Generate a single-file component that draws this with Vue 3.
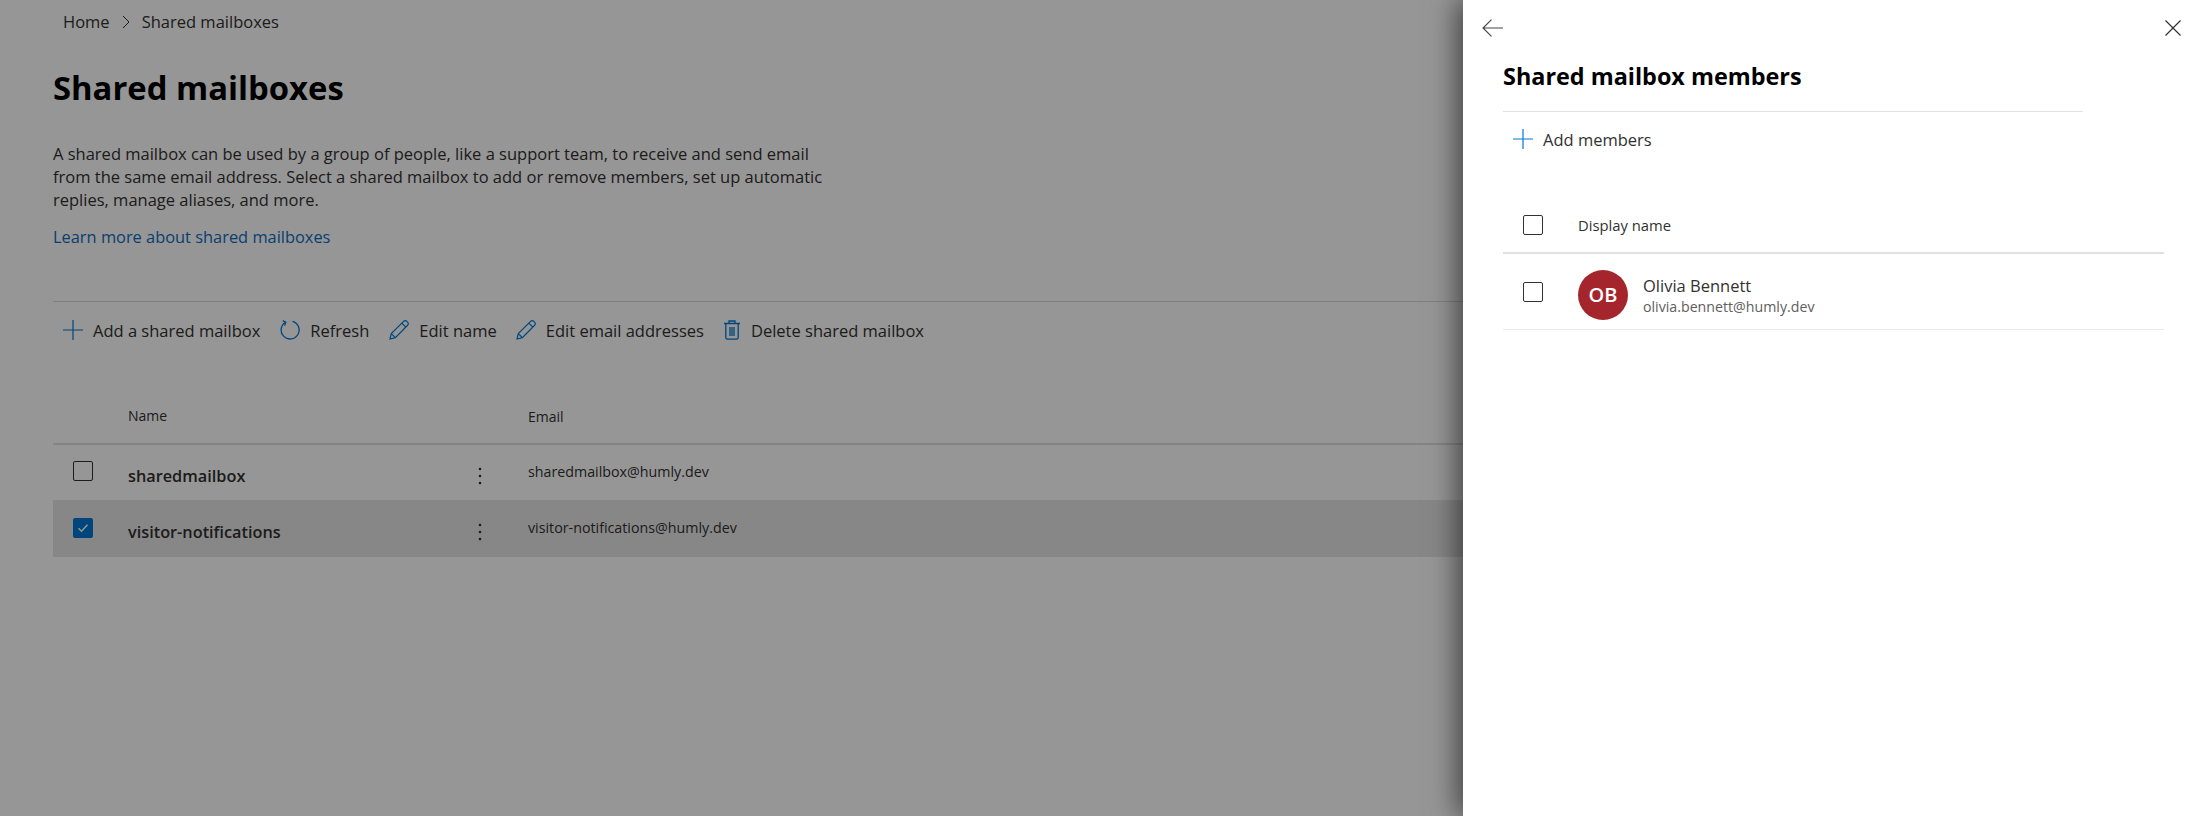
<script setup>
const mailboxes = [
  { name: 'sharedmailbox', email: 'sharedmailbox@humly.dev', selected: false },
  { name: 'visitor-notifications', email: 'visitor-notifications@humly.dev', selected: true },
]
</script>

<template>
  <div class="page">
    <main class="main">
      <nav class="crumbs">
        <span>Home</span>
        <svg class="chev" width="8" height="14" viewBox="0 0 8 14"><path d="M1 1l6 6-6 6" fill="none" stroke="#323130" stroke-width="1"/></svg>
        <span>Shared mailboxes</span>
      </nav>
      <h1 class="title">Shared mailboxes</h1>
      <p class="intro">A shared mailbox can be used by a group of people, like a support team, to receive and send email from the same email address. Select a shared mailbox to add or remove members, set up automatic replies, manage aliases, and more.</p>
      <a class="link">Learn more about shared mailboxes</a>

      <div class="toolbar">
        <button class="tool t-add">
          <svg width="20" height="20" viewBox="0 0 20 20"><path d="M10 0v20M0 10h20" stroke="#0078d4" stroke-width="1.2" fill="none"/></svg>
          <span>Add a shared mailbox</span>
        </button>
        <button class="tool t-refresh">
          <svg width="20" height="20" viewBox="0 0 20 20" fill="none" stroke="#0078d4" stroke-width="1.3"><path d="M5.6 2.2A9 9 0 1 0 12.5 1.3"/><path d="M2.8 .6 5.8 2.2 4.6 5.6"/></svg>
          <span>Refresh</span>
        </button>
        <button class="tool t-edit">
          <svg width="20" height="20" viewBox="0 0 20 20" fill="none" stroke="#0078d4" stroke-width="1.2"><path d="M1 19l1.3-5.4L14.6 1.4a2.2 2.2 0 0 1 3.3 0l.7.7a2.2 2.2 0 0 1 0 3.2L6.4 17.6 1 19z"/><path d="M2.3 13.6l4.1 4M12.8 3.2l4 4"/></svg>
          <span>Edit name</span>
        </button>
        <button class="tool t-mail">
          <svg width="20" height="20" viewBox="0 0 20 20" fill="none" stroke="#0078d4" stroke-width="1.2"><path d="M1 19l1.3-5.4L14.6 1.4a2.2 2.2 0 0 1 3.3 0l.7.7a2.2 2.2 0 0 1 0 3.2L6.4 17.6 1 19z"/><path d="M2.3 13.6l4.1 4M12.8 3.2l4 4"/></svg>
          <span>Edit email addresses</span>
        </button>
        <button class="tool t-del">
          <svg width="18" height="20" viewBox="0 0 18 20" fill="none" stroke="#0078d4" stroke-width="1.3"><path d="M1 3.5h16M6 3.5V1h6v2.5M2.8 3.5V17.5a1.6 1.6 0 0 0 1.6 1.6h9.2a1.6 1.6 0 0 0 1.6-1.6V3.5M7 7v9M9 7v9M11 7v9"/></svg>
          <span>Delete shared mailbox</span>
        </button>
      </div>

      <div class="thead">
        <span class="c-name">Name</span>
        <span class="c-email">Email</span>
      </div>
      <div v-for="m in mailboxes" :key="m.name" class="row" :class="{ selected: m.selected }">
        <span class="check" :class="{ on: m.selected }">
          <svg v-if="m.selected" width="12" height="10" viewBox="0 0 12 10"><path d="M1.5 5.2l3 3 6-6.5" fill="none" stroke="#fff" stroke-width="1.4"/></svg>
        </span>
        <strong class="c-name mb-name">{{ m.name }}</strong>
        <svg class="dots" width="4" height="18" viewBox="0 0 4 18"><circle cx="2" cy="2" r="1.3"/><circle cx="2" cy="9" r="1.3"/><circle cx="2" cy="16" r="1.3"/></svg>
        <span class="c-email mb-email">{{ m.email }}</span>
      </div>
    </main>

    <div class="scrim"></div>

    <aside class="panel">
      <div class="panel-top">
        <svg width="21" height="18" viewBox="0 0 21 18" fill="none" stroke="#484644" stroke-width="1.2"><path d="M21 9H1.5M9.5 .6 1 9l8.5 8.4"/></svg>
        <svg width="16" height="16" viewBox="0 0 16 16" fill="none" stroke="#323130" stroke-width="1.2"><path d="M.5.5l15 15M15.5.5l-15 15"/></svg>
      </div>
      <h2 class="panel-title">Shared mailbox members</h2>
      <button class="tool add-members">
        <svg width="20" height="20" viewBox="0 0 20 20"><path d="M10 0v20M0 10h20" stroke="#0078d4" stroke-width="1.2" fill="none"/></svg>
        <span>Add members</span>
      </button>
      <div class="m-head">
        <span class="check"></span>
        <span class="m-label">Display name</span>
      </div>
      <div class="m-row">
        <span class="check"></span>
        <span class="avatar">OB</span>
        <div class="person">
          <div class="p-name">Olivia Bennett</div>
          <div class="p-mail">olivia.bennett@humly.dev</div>
        </div>
      </div>
    </aside>
  </div>
</template>

<style scoped>
.page {
  position: relative;
  width: 2197px;
  height: 816px;
  overflow: hidden;
  background: #fff;
  color: #323130;
  font-family: "Open Sans", "Noto Sans", sans-serif;
  font-size: 16.5px;
}
.main { padding: 0 0 0 53px; }
.crumbs {
  display: flex;
  align-items: center;
  gap: 12px;
  height: 43px;
  padding-left: 10px;
}
.title {
  margin: 23px 0 0;
  font-size: 32.8px;
  line-height: 44px;
  font-weight: 700;
  color: #000;
}
.intro {
  margin: 32px 0 0;
  width: 790px;
  line-height: 23px;
}
.link {
  display: block;
  margin-top: 14px;
  font-size: 16.4px;
  line-height: 23px;
  color: #0f6cbd;
}
.toolbar {
  display: flex;
  align-items: center;
  height: 56px;
  margin-top: 53px;
  border-top: 1px solid #d8d8d8;
  padding-left: 10px;
}
button.tool {
  display: inline-flex;
  align-items: center;
  gap: 10px;
  padding: 0;
  border: 0;
  background: none;
  color: inherit;
  font: inherit;
}
.t-refresh { margin-left: 20px; }
.t-edit { margin-left: 20px; }
.t-mail { margin-left: 19px; }
.t-del { margin-left: 19px; }
.thead {
  height: 87px;
  display: flex;
  align-items: flex-end;
  padding-bottom: 17px;
  box-sizing: border-box;
  border-bottom: 2px solid #e1e1e1;
  font-size: 14px;
  padding-left: 75px;
}
.thead .c-name { width: 400px; line-height: 20px; }
.row {
  display: flex;
  align-items: center;
  height: 56px;
  padding-left: 20px;
  box-sizing: border-box;
}
.row.selected {
  height: 57px;
  margin-top: -1px;
  padding-top: 1px;
  background: #e6e6e6;
}
.check {
  flex: none;
  width: 20px;
  height: 20px;
  box-sizing: border-box;
  border: 1px solid #323130;
  border-radius: 2px;
  display: flex;
  align-items: center;
  justify-content: center;
}
.row .check { margin-bottom: 4px; margin-right: 35px; }
.row .check.on { margin-bottom: 2px; background: #0078d4; border-color: #0078d4; }
.mb-name { width: 350px; font-weight: 600; font-size: 16.3px; padding-top: 6px; }
.dots { fill: #323130; margin: 6px 46px 0 0; }
.mb-email { font-size: 14.25px; margin-bottom: 3px; }
.scrim {
  position: absolute;
  inset: 0;
  background: rgba(0, 0, 0, 0.41);
}
.panel {
  position: absolute;
  top: 0;
  right: 0;
  bottom: 0;
  width: 734px;
  padding: 0 33px 0 40px;
  box-sizing: border-box;
  background: #fff;
  box-shadow: -6px 0 26px rgba(0, 0, 0, 0.55);
}
.panel-top {
  display: flex;
  align-items: center;
  justify-content: space-between;
  height: 56px;
  margin: 0 -17px 0 -21px;
}
.panel-title {
  margin: 0;
  height: 56px;
  width: 580px;
  box-sizing: border-box;
  border-bottom: 1px solid #e1e1e1;
  font-size: 23.4px;
  line-height: 40px;
  font-weight: 700;
  color: #000;
}
button.add-members { display: flex; margin: 17px 0 0 10px; height: 20px; }
.m-head {
  display: flex;
  align-items: center;
  height: 60px;
  margin-top: 45px;
  padding: 4px 0 0 20px;
  border-bottom: 2px solid #e1e1e1;
  box-sizing: border-box;
}
.m-label { margin-left: 35px; font-size: 14.8px; }
.m-row {
  display: flex;
  align-items: center;
  height: 76px;
  padding: 6px 0 0 20px;
  border-bottom: 1px solid #edebe9;
  box-sizing: border-box;
}
.m-row .check { margin-bottom: 6px; }
.avatar {
  margin-left: 35px;
  width: 50px;
  height: 50px;
  border-radius: 50%;
  background: #a4262c;
  color: #fff;
  font-size: 20px;
  font-weight: 600;
  display: flex;
  align-items: center;
  justify-content: center;
}
.person { margin-left: 15px; }
.p-name { font-size: 16.5px; line-height: 24px; }
.p-mail { font-size: 14.2px; line-height: 18px; color: #605e5c; }
</style>
